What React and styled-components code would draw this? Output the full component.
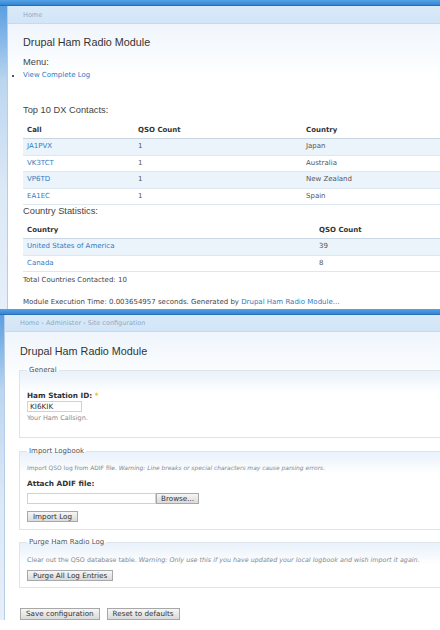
import React from 'react';
import styled, { createGlobalStyle } from 'styled-components';

const GlobalStyle = createGlobalStyle`
  html, body {
    margin: 0;
    padding: 0;
    background: #fff;
  }
  body {
    font-family: "DejaVu Sans", Verdana, sans-serif;
    color: #494949;
  }
`;

const Screen = styled.div`
  width: 440px;
  overflow: hidden;
`;

const TopBar = styled.div`
  height: 5px;
  background: linear-gradient(#55a2e6, #3585d3);
  border-bottom: 1px solid #2a6db8;
`;

const Body = styled.div`
  display: flex;
`;

const Strip = styled.div`
  flex: 0 0 ${(p) => p.w}px;
  box-sizing: border-box;
  background: linear-gradient(#5b9fe0, #bcd6f0 25%, #dbe8f6 60%, #e6eff9);
  border-right: 1px solid #b5cde6;
`;

const Main = styled.div`
  flex: 1;
  min-width: 0;
  background: linear-gradient(#eaf2fb, #ffffff 70px);
`;

const Crumbs = styled.div`
  box-sizing: border-box;
  height: ${(p) => p.h}px;
  display: flex;
  align-items: center;
  padding-left: 15px;
  background: linear-gradient(#d9eaf9, #d2e5f7);
  border-bottom: 1px solid #c5dbf0;
  font-size: 6.5px;
  color: #8ea9c6;
  white-space: nowrap;
`;

const Content = styled.div`
  padding: 0 0 ${(p) => p.pb || 0}px 15px;
`;

const Title = styled.h2`
  margin: ${(p) => p.mt}px 0 0;
  font: normal 10.8px/14px "Liberation Sans", Arial, sans-serif;
  color: #333;
`;

const Heading = styled.div`
  margin-top: ${(p) => p.mt}px;
  font: 9.3px/12px "Liberation Sans", Arial, sans-serif;
  color: #444;
`;

const Menu = styled.ul`
  margin: 2px 0 0 -13px;
  padding: 0 0 0 13px;
  list-style: none;
  font-size: 7px;
  line-height: 11px;
`;

const MenuItem = styled.li`
  display: flex;
  align-items: center;
  &::before {
    content: '';
    flex: 0 0 2px;
    height: 2px;
    background: #555;
    margin: 0 9px 0 -11px;
  }
`;

const Link = styled.a`
  color: #2f7bc4;
  text-decoration: none;
`;

const Table = styled.table`
  margin-top: ${(p) => p.mt}px;
  width: 100%;
  border-collapse: collapse;
  font-size: 7px;
  table-layout: fixed;
`;

const Th = styled.th`
  width: ${(p) => (p.w ? `${p.w}px` : 'auto')};
  text-align: left;
  padding: 0 4px;
  line-height: 16px;
  font-weight: bold;
  color: #333;
  border-bottom: 1px solid #c8d5e2;
`;

const Tr = styled.tr`
  background: ${(p) => (p.odd ? '#ebf3fb' : '#fff')};
`;

const Td = styled.td`
  padding: 0 4px;
  line-height: 15.5px;
  color: #555;
  border-bottom: 1px solid #dde7f1;
  white-space: nowrap;
`;

const Note = styled.div`
  margin-top: ${(p) => p.mt}px;
  font-size: 7px;
  line-height: 11px;
  color: #444;
  white-space: nowrap;
`;

const Fieldset = styled.fieldset`
  margin: ${(p) => p.mt}px -20px 0 -1px;
  padding: 0 0 ${(p) => p.pb}px 7px;
  border: 1px solid #dfe4ea;
  background: linear-gradient(#e9f1fa, #ffffff 22px);
`;

const Legend = styled.legend`
  padding: 0 2px;
  font-size: 7px;
  line-height: 11px;
  color: #555;
`;

const Label = styled.div`
  margin-top: ${(p) => p.mt}px;
  font-size: 7.3px;
  line-height: 11px;
  font-weight: bold;
  color: #333;
`;

const Required = styled.span`
  color: #f0c020;
`;

const TextBox = styled.div`
  box-sizing: border-box;
  width: ${(p) => p.w}px;
  height: 11px;
  border: 1px solid #d2d2d2;
  background: #fff;
  font-size: 7.3px;
  line-height: 9px;
  padding-left: 2px;
  color: #333;
`;

const Help = styled.div`
  margin-top: ${(p) => p.mt}px;
  font-size: ${(p) => p.fs || 6}px;
  line-height: 10px;
  color: #8a8a8a;
  white-space: nowrap;
  em {
    font-style: italic;
  }
`;

const FileRow = styled.div`
  display: flex;
  margin-top: 3.5px;
`;

const Button = styled.button`
  box-sizing: border-box;
  height: ${(p) => p.h || 11}px;
  margin: ${(p) => p.mt || 0}px 0 0;
  padding: 0 ${(p) => p.px || 5}px;
  border: 1px solid #a8a8a8;
  background: linear-gradient(#f6f6f6, #dadada);
  font-family: "DejaVu Sans", Verdana, sans-serif;
  font-size: 7.2px;
  line-height: 9px;
  color: #333;
  display: block;
  white-space: nowrap;
`;

const Actions = styled.div`
  display: flex;
  gap: 7px;
  margin-top: 20px;
`;

const dx = [
  ['JA1PVX', '1', 'Japan'],
  ['VK3TCT', '1', 'Australia'],
  ['VP6TD', '1', 'New Zealand'],
  ['EA1EC', '1', 'Spain'],
];

const countries = [
  ['United States of America', '39'],
  ['Canada', '8'],
];

export default function App() {
  return (
    <>
      <GlobalStyle />
      <Screen>
        <TopBar />
        <Body>
          <Strip w={8} />
          <Main>
            <Crumbs h={18}>Home</Crumbs>
            <Content pb={1}>
              <Title mt={11}>Drupal Ham Radio Module</Title>
              <Heading mt={7}>Menu:</Heading>
              <Menu>
                <MenuItem>
                  <Link href="#">View Complete Log</Link>
                </MenuItem>
              </Menu>
              <Heading mt={23}>Top 10 DX Contacts:</Heading>
              <Table mt={6}>
                <thead>
                  <tr>
                    <Th w={103}>Call</Th>
                    <Th w={160}>QSO Count</Th>
                    <Th>Country</Th>
                  </tr>
                </thead>
                <tbody>
                  {dx.map(([call, n, c], i) => (
                    <Tr key={call} odd={i % 2 === 0}>
                      <Td>
                        <Link href="#">{call}</Link>
                      </Td>
                      <Td>{n}</Td>
                      <Td>{c}</Td>
                    </Tr>
                  ))}
                </tbody>
              </Table>
              <Heading mt={0}>Country Statistics:</Heading>
              <Table mt={5}>
                <thead>
                  <tr>
                    <Th w={284}>Country</Th>
                    <Th>QSO Count</Th>
                  </tr>
                </thead>
                <tbody>
                  {countries.map(([c, n], i) => (
                    <Tr key={c} odd={i % 2 === 0}>
                      <Td>
                        <Link href="#">{c}</Link>
                      </Td>
                      <Td>{n}</Td>
                    </Tr>
                  ))}
                </tbody>
              </Table>
              <Note mt={3}>Total Countries Contacted: 10</Note>
              <Note mt={11}>
                Module Execution Time: 0.003654957 seconds. Generated by{' '}
                <Link href="#">Drupal Ham Radio Module...</Link>
              </Note>
            </Content>
          </Main>
        </Body>
      </Screen>

      <Screen>
        <TopBar />
        <Body>
          <Strip w={5} />
          <Main>
            <Crumbs h={17}>Home › Administer › Site configuration</Crumbs>
            <Content>
              <Title mt={12}>Drupal Ham Radio Module</Title>

              <Fieldset mt={7} pb={14}>
                <Legend>General</Legend>
                <Label mt={14}>
                  Ham Station ID: <Required>*</Required>
                </Label>
                <TextBox w={55}>KI6KIK</TextBox>
                <Help mt={1} fs={6.5}>
                  Your Ham Callsign.
                </Help>
              </Fieldset>

              <Fieldset mt={8} pb={7}>
                <Legend>Import Logbook</Legend>
                <Help mt={5.5} fs={5.95}>
                  Import QSO log from ADIF file.{' '}
                  <em>Warning: Line breaks or special characters may cause parsing errors.</em>
                </Help>
                <Label mt={5.5}>Attach ADIF file:</Label>
                <FileRow>
                  <TextBox w={129} />
                  <Button px={4}>Browse...</Button>
                </FileRow>
                <Button mt={7}>Import Log</Button>
              </Fieldset>

              <Fieldset mt={7.5} pb={6}>
                <Legend>Purge Ham Radio Log</Legend>
                <Help mt={6.5} fs={6.4}>
                  Clear out the QSO database table.{' '}
                  <em>
                    Warning: Only use this if you have updated your local logbook and wish import it
                    again.
                  </em>
                </Help>
                <Button mt={5}>Purge All Log Entries</Button>
              </Fieldset>

              <Actions>
                <Button h={12}>Save configuration</Button>
                <Button h={12}>Reset to defaults</Button>
              </Actions>
            </Content>
          </Main>
        </Body>
      </Screen>
    </>
  );
}
